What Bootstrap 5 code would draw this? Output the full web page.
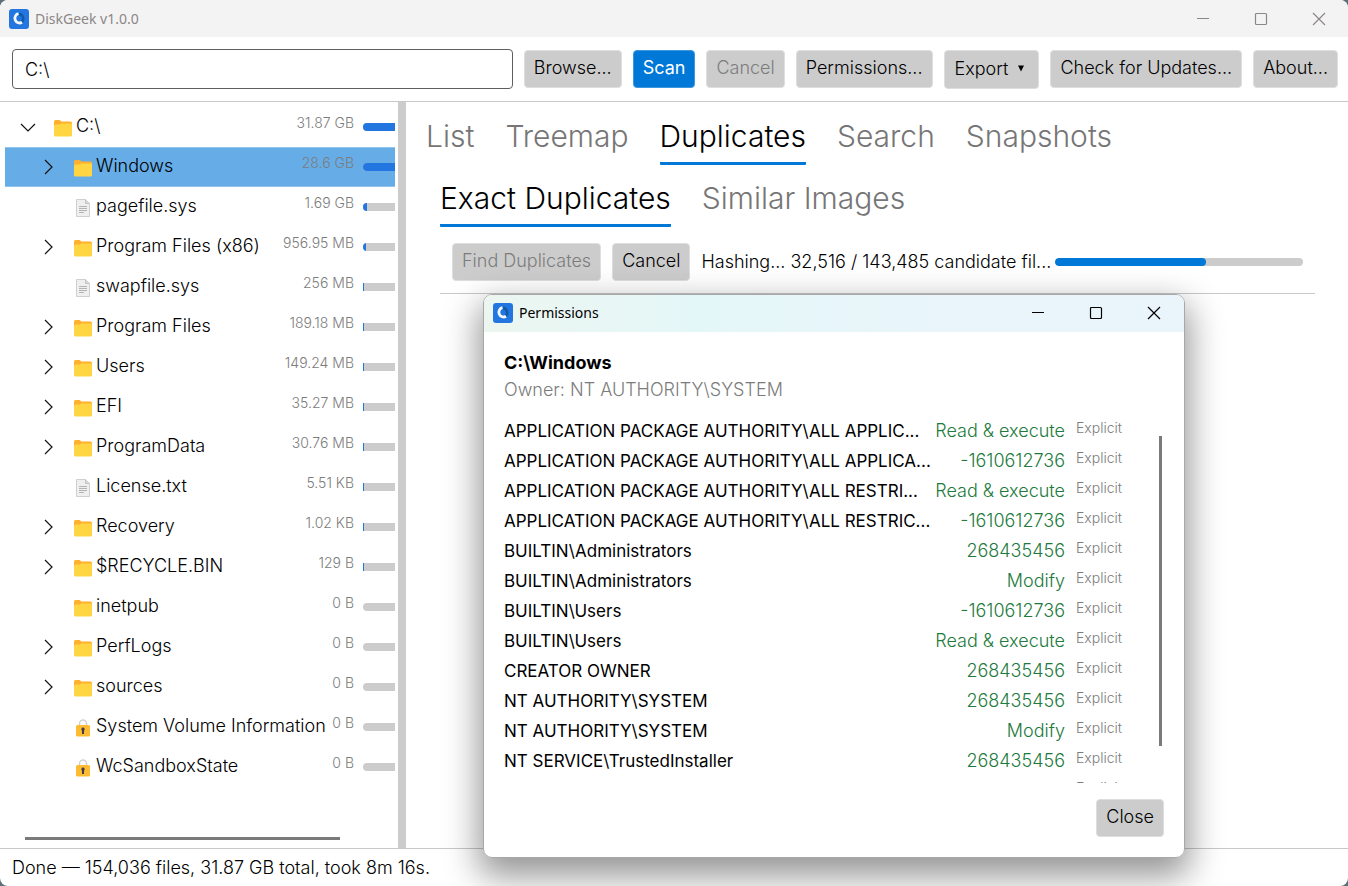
<!DOCTYPE html>
<html lang="en">
<head>
<meta charset="utf-8">
<meta name="viewport" content="width=device-width, initial-scale=1">
<title>DiskGeek v1.0.0</title>
<link href="https://cdn.jsdelivr.net/npm/bootstrap@5.3.0/dist/css/bootstrap.min.css" rel="stylesheet">
<style>
:root { --accent: #0078d7; --bar: #2376e0; --control: #cccccc; --dim: #7c7c7c; }
body { font-family: Inter, "Liberation Sans", sans-serif; font-size: 18px; line-height: 24px; font-weight: 300; color: #000; background: #5d6f78; }
.app-window { background: #fff; border-radius: 8px; }
.title-bar { height: 37px; font-family: "Noto Sans", "Open Sans", sans-serif; font-weight: 400; font-size: 14px; line-height: 20px; padding-left: 9px; gap: 6px; }
.app-window > .title-bar { background: #f3f3f3; color: #8c8686; }
.caption-btn { width: 58px; height: 36px; border: 0; background: none; color: inherit; padding: 0; display: flex; align-items: center; justify-content: center; }
.tool-bar { padding: 12px 10px 12px 12px; gap: 11px; border-bottom: 1px solid #c8c8c8; height: 65px; }
.path-box { height: 40px; border: 1px solid #5f5f5f; border-radius: 4px; padding: 0 12px; color: #000; font-size: 18px; font-weight: 300; }
.cmd { font-size: 18px; line-height: 23px; font-weight: 300; color: #000; background: var(--control); border: 1px solid #dedede; border-radius: 4px; padding: 5px 9px 8px; white-space: nowrap; }
.cmd:disabled { color: var(--dim); }
.cmd-primary { background: var(--accent); border-color: #3d98e0; color: #fff; font-weight: 400; }
.cmd-menu { padding: 6px 13px 8px 10px; display: flex; align-items: center; gap: 9px; }
.side-pane { width: 398px; padding: 5px 3px 0 5px; }
.splitter { width: 8px; background: var(--control); }
.tree-row { height: 40px; padding: 1px 0; }
.tree-row > div { height: 38px; }
.tree-row .current { background: #66ade7; box-shadow: 0 1px #90c4ee, 0 -1px #90c4ee; }
.toggle { width: 20px; height: 30px; padding: 0; border: 0; background: none; display: flex; align-items: center; justify-content: center; flex: none; }
.root .toggle { margin-left: 13px; margin-right: 16px; }
.child .toggle { margin-left: 33px; margin-right: 16px; }
.glyph { width: 18px; height: 18px; flex: none; margin-top: 2px; }
.name { margin-left: 4px; margin-bottom: 2px; white-space: nowrap; }
.size { margin-left: auto; color: var(--dim); font-size: 14px; line-height: 20px; margin-bottom: 8px; margin-right: 9px; white-space: nowrap; }
.usage { width: 32px; height: 8px; border-radius: 4px 0 0 4px; background: var(--control); flex: none; }
.usage .progress-bar { background: var(--bar); }
.h-scroll { height: 3px; background: #7a7a7a; margin: 0 55px 8px 20px; }
.tabs { gap: 31px; }
.tab-link { font-size: 30px; line-height: 36px; font-weight: 300; color: #767676; text-decoration: none; padding-bottom: 8px; border-bottom: 3px solid transparent; border-radius: 1px; }
.tab-link.active { color: #000; border-bottom-color: var(--accent); }
.main-pane { padding: 16px 33px 0 20px; }
.sub-pane { margin-left: 14px; padding-top: 15px; }
.find-bar { padding: 16px 12px 12px; gap: 11px; border-bottom: 1px solid #c8c8c8; }
.hash-bar { height: 8px; border-radius: 4px; background: var(--control); }
.hash-bar .progress-bar { background: var(--accent); border-radius: 4px; }
.status { border-top: 1px solid #c8c8c8; padding: 7px 12px; height: 38px; }
.dialog-layer { position: absolute; left: 483px; top: 294px; width: 702px; border-radius: 9px; box-shadow: 0 14px 34px 4px rgba(0,0,0,.42); }
.dialog-box { height: 564px; background: #fff; border: 1px solid #a8a8a8; border-radius: 9px; }
.dialog-box .title-bar { background: linear-gradient(90deg, #ecf6f0, #e4f7f8 30%, #e9f5fa 65%, #e9f5fb); padding-right: 1px; padding-bottom: 1px; }
.dialog-body { padding: 17px 20px 20px; line-height: 27px; }
.owner { color: var(--dim); }
.acl { margin-top: 13px; }
.acl table { border-collapse: collapse; min-width: 0; }
.acl td { height: 30px; padding: 0; white-space: nowrap; vertical-align: middle; line-height: 30px; }
.acl .who { font-size: 17px; font-weight: 400; }
.acl .rights { color: #217a3c; text-align: right; }
.acl .kind { color: var(--dim); font-size: 14px; line-height: 20px; width: 57px; padding: 0 0 6px 11px; }
.v-scroll { width: 3px; height: 310px; background: #7a7a7a; margin: 20px 2px 0 37px; }
</style>
</head>
<body>
<svg class="d-none" xmlns="http://www.w3.org/2000/svg">
  <symbol id="logo" viewBox="0 0 20 20"><rect width="20" height="20" rx="3" fill="#2376e0"/><path d="M10 3.500a6 6 0 0 1 5.500 6a6 6 0 0 1-5.500 6z" fill="#115aa8"/><circle cx="10" cy="9.500" r="2.800" fill="#2376e0"/><path d="M9.500 4.700a4.700 4.700 0 1 0 3.500 8.600" fill="none" stroke="#f4f8fd" stroke-width="2.800"/></symbol>
  <symbol id="folder" viewBox="0 0 18 18"><path d="M0 2.500a1.500 1.500 0 0 1 1.500-1.500h4L7.500 2.500H16.500A1.500 1.500 0 0 1 18 4V9H0z" fill="#ffb02e"/><path d="M0 7a1.500 1.500 0 0 1 1.500-1.500H5.500L7.500 4.500H17a1 1 0 0 1 1 1v10.500a1.500 1.500 0 0 1-1.500 1.500h-15A1.500 1.500 0 0 1 0 16z" fill="#ffd542"/></symbol>
  <symbol id="file" viewBox="0 0 18 18"><path d="M2.500 .5h9l4 4v13h-13z" fill="#efefef" stroke="#cfcfcf"/><path d="M11.500 .5v4h4" fill="#d8d8d8" stroke="#c4c4c4"/><path d="M5 7.500h8M5 9.500h8M5 11.500h8M5 13.500h5" stroke="#b4b4b4" fill="none"/></symbol>
  <symbol id="lock" viewBox="0 0 18 18"><path d="M5.500 8V4.500a3.500 3.500 0 0 1 7 0v3.500" fill="none" stroke="#d3d3d3" stroke-width="1.600"/><rect x="2" y="6" width="14" height="11.500" rx="1.500" fill="#fcbb30"/><path d="M9 8.500a1.800 1.800 0 0 1 1 3.200V15H8v-3.300a1.800 1.800 0 0 1 1-3.200z" fill="#433b45"/></symbol>
  <symbol id="right" viewBox="0 0 16 16"><path d="M5 1l7 7-7 7" fill="none" stroke="#111" stroke-width="1.200"/></symbol>
  <symbol id="down" viewBox="0 0 16 16"><path d="M1 5l7 7 7-7" fill="none" stroke="#111" stroke-width="1.200"/></symbol>
  <symbol id="min" viewBox="0 0 14 14"><path d="M1 6.500h12" stroke="currentColor" fill="none"/></symbol>
  <symbol id="max" viewBox="0 0 14 14"><rect x="1.500" y="1.500" width="11" height="11" rx="1" stroke="currentColor" stroke-width="1.200" fill="none"/></symbol>
  <symbol id="close" viewBox="0 0 14 14"><path d="M1 1l12 12M13 1L1 13" stroke="currentColor" stroke-width="1.200" fill="none"/></symbol>
</svg>

<div class="app-window d-flex flex-column vh-100 overflow-hidden">
  <header class="title-bar d-flex align-items-center flex-shrink-0">
    <svg width="20" height="20"><use href="#logo"/></svg><span>DiskGeek v1.0.0</span>
    <div class="d-flex ms-auto">
      <button class="caption-btn" aria-label="Minimize"><svg width="14" height="14"><use href="#min"/></svg></button>
      <button class="caption-btn" aria-label="Maximize"><svg width="14" height="14"><use href="#max"/></svg></button>
      <button class="caption-btn" aria-label="Close window"><svg width="14" height="14"><use href="#close"/></svg></button>
    </div>
  </header>

  <div class="tool-bar d-flex align-items-center flex-shrink-0">
    <input class="path-box flex-grow-1 w-25" type="text" value="C:\" aria-label="Path">
    <button class="cmd">Browse...</button>
    <button class="cmd cmd-primary">Scan</button>
    <button class="cmd" disabled>Cancel</button>
    <button class="cmd">Permissions...</button>
    <button class="cmd cmd-menu">Export <svg width="8" height="7" viewBox="0 0 8 7"><path d="M1 .5h6L4 6.500z"/></svg></button>
    <button class="cmd">Check for Updates...</button>
    <button class="cmd">About...</button>
  </div>

  <div class="d-flex flex-grow-1 overflow-hidden">
    <nav class="side-pane d-flex flex-column flex-shrink-0" aria-label="Folders">
      <ul class="list-unstyled mb-auto">
        <li class="tree-row root"><div class="d-flex align-items-center"><button class="toggle" aria-label="Collapse"><svg width="16" height="16"><use href="#down"/></svg></button><svg class="glyph"><use href="#folder"/></svg><span class="name">C:\</span><span class="size">31.87 GB</span><div class="progress usage"><div class="progress-bar" style="width:100%"></div></div></div></li>
        <li class="tree-row child"><div class="d-flex align-items-center current"><button class="toggle" aria-label="Expand"><svg width="16" height="16"><use href="#right"/></svg></button><svg class="glyph"><use href="#folder"/></svg><span class="name">Windows</span><span class="size">28.6 GB</span><div class="progress usage"><div class="progress-bar" style="width:100%"></div></div></div></li>
        <li class="tree-row child"><div class="d-flex align-items-center"><span class="toggle"></span><svg class="glyph"><use href="#file"/></svg><span class="name">pagefile.sys</span><span class="size">1.69 GB</span><div class="progress usage"><div class="progress-bar" style="width:12%"></div></div></div></li>
        <li class="tree-row child"><div class="d-flex align-items-center"><button class="toggle" aria-label="Expand"><svg width="16" height="16"><use href="#right"/></svg></button><svg class="glyph"><use href="#folder"/></svg><span class="name">Program Files (x86)</span><span class="size">956.95 MB</span><div class="progress usage"><div class="progress-bar" style="width:9%"></div></div></div></li>
        <li class="tree-row child"><div class="d-flex align-items-center"><span class="toggle"></span><svg class="glyph"><use href="#file"/></svg><span class="name">swapfile.sys</span><span class="size">256 MB</span><div class="progress usage rounded-0"><div class="progress-bar" style="width:3%"></div></div></div></li>
        <li class="tree-row child"><div class="d-flex align-items-center"><button class="toggle" aria-label="Expand"><svg width="16" height="16"><use href="#right"/></svg></button><svg class="glyph"><use href="#folder"/></svg><span class="name">Program Files</span><span class="size">189.18 MB</span><div class="progress usage rounded-0"><div class="progress-bar" style="width:3%"></div></div></div></li>
        <li class="tree-row child"><div class="d-flex align-items-center"><button class="toggle" aria-label="Expand"><svg width="16" height="16"><use href="#right"/></svg></button><svg class="glyph"><use href="#folder"/></svg><span class="name">Users</span><span class="size">149.24 MB</span><div class="progress usage rounded-0"><div class="progress-bar" style="width:3%"></div></div></div></li>
        <li class="tree-row child"><div class="d-flex align-items-center"><button class="toggle" aria-label="Expand"><svg width="16" height="16"><use href="#right"/></svg></button><svg class="glyph"><use href="#folder"/></svg><span class="name">EFI</span><span class="size">35.27 MB</span><div class="progress usage rounded-0"><div class="progress-bar" style="width:3%"></div></div></div></li>
        <li class="tree-row child"><div class="d-flex align-items-center"><button class="toggle" aria-label="Expand"><svg width="16" height="16"><use href="#right"/></svg></button><svg class="glyph"><use href="#folder"/></svg><span class="name">ProgramData</span><span class="size">30.76 MB</span><div class="progress usage rounded-0"><div class="progress-bar" style="width:3%"></div></div></div></li>
        <li class="tree-row child"><div class="d-flex align-items-center"><span class="toggle"></span><svg class="glyph"><use href="#file"/></svg><span class="name">License.txt</span><span class="size">5.51 KB</span><div class="progress usage rounded-0"><div class="progress-bar" style="width:3%"></div></div></div></li>
        <li class="tree-row child"><div class="d-flex align-items-center"><button class="toggle" aria-label="Expand"><svg width="16" height="16"><use href="#right"/></svg></button><svg class="glyph"><use href="#folder"/></svg><span class="name">Recovery</span><span class="size">1.02 KB</span><div class="progress usage rounded-0"><div class="progress-bar" style="width:3%"></div></div></div></li>
        <li class="tree-row child"><div class="d-flex align-items-center"><button class="toggle" aria-label="Expand"><svg width="16" height="16"><use href="#right"/></svg></button><svg class="glyph"><use href="#folder"/></svg><span class="name">$RECYCLE.BIN</span><span class="size">129 B</span><div class="progress usage rounded-0"><div class="progress-bar" style="width:3%"></div></div></div></li>
        <li class="tree-row child"><div class="d-flex align-items-center"><span class="toggle"></span><svg class="glyph"><use href="#folder"/></svg><span class="name">inetpub</span><span class="size">0 B</span><div class="progress usage"></div></div></li>
        <li class="tree-row child"><div class="d-flex align-items-center"><button class="toggle" aria-label="Expand"><svg width="16" height="16"><use href="#right"/></svg></button><svg class="glyph"><use href="#folder"/></svg><span class="name">PerfLogs</span><span class="size">0 B</span><div class="progress usage"></div></div></li>
        <li class="tree-row child"><div class="d-flex align-items-center"><button class="toggle" aria-label="Expand"><svg width="16" height="16"><use href="#right"/></svg></button><svg class="glyph"><use href="#folder"/></svg><span class="name">sources</span><span class="size">0 B</span><div class="progress usage"></div></div></li>
        <li class="tree-row child"><div class="d-flex align-items-center"><span class="toggle"></span><svg class="glyph"><use href="#lock"/></svg><span class="name">System Volume Information</span><span class="size">0 B</span><div class="progress usage"></div></div></li>
        <li class="tree-row child"><div class="d-flex align-items-center"><span class="toggle"></span><svg class="glyph"><use href="#lock"/></svg><span class="name">WcSandboxState</span><span class="size">0 B</span><div class="progress usage"></div></div></li>
      </ul>
      <div class="h-scroll"></div>
    </nav>
    <div class="splitter flex-shrink-0"></div>
    <main class="main-pane flex-grow-1">
      <nav class="tabs d-flex" aria-label="Views">
        <a class="tab-link" href="#list">List</a>
        <a class="tab-link" href="#treemap">Treemap</a>
        <a class="tab-link active" href="#duplicates">Duplicates</a>
        <a class="tab-link" href="#search">Search</a>
        <a class="tab-link" href="#snapshots">Snapshots</a>
      </nav>
      <section class="sub-pane">
        <nav class="tabs d-flex" aria-label="Duplicate modes">
          <a class="tab-link active" href="#exact">Exact Duplicates</a>
          <a class="tab-link" href="#similar">Similar Images</a>
        </nav>
        <div class="find-bar d-flex align-items-center">
          <button class="cmd" disabled>Find Duplicates</button>
          <button class="cmd">Cancel</button>
          <div class="d-flex flex-grow-1 align-items-center gap-1">
            <span class="text-nowrap">Hashing... 32,516 / 143,485 candidate fil...</span>
            <div class="progress hash-bar flex-grow-1"><div class="progress-bar" style="width:61%"></div></div>
          </div>
        </div>
      </section>
    </main>
  </div>

  <footer class="status flex-shrink-0">Done — 154,036 files, 31.87 GB total, took 8m 16s.</footer>
</div>

<div class="dialog-layer">
<div class="dialog-box d-flex flex-column overflow-hidden" role="dialog" aria-label="Permissions">
  <div class="title-bar d-flex align-items-center flex-shrink-0">
    <svg width="20" height="20"><use href="#logo"/></svg><span>Permissions</span>
    <div class="d-flex ms-auto">
      <button class="caption-btn" aria-label="Minimize dialog"><svg width="14" height="14"><use href="#min"/></svg></button>
      <button class="caption-btn" aria-label="Maximize dialog"><svg width="14" height="14"><use href="#max"/></svg></button>
      <button class="caption-btn" aria-label="Close dialog"><svg width="14" height="14"><use href="#close"/></svg></button>
    </div>
  </div>
  <div class="dialog-body d-flex flex-column flex-grow-1 overflow-hidden">
    <div class="fw-bold">C:\Windows</div>
    <div class="owner">Owner: NT AUTHORITY\SYSTEM</div>
    <div class="acl d-flex flex-grow-1 overflow-hidden">
      <table class="flex-grow-1 align-self-start">
        <tbody>
          <tr><td class="who">APPLICATION PACKAGE AUTHORITY\ALL APPLIC...</td><td class="rights">Read &amp; execute</td><td class="kind">Explicit</td></tr>
          <tr><td class="who">APPLICATION PACKAGE AUTHORITY\ALL APPLICA...</td><td class="rights">-1610612736</td><td class="kind">Explicit</td></tr>
          <tr><td class="who">APPLICATION PACKAGE AUTHORITY\ALL RESTRI...</td><td class="rights">Read &amp; execute</td><td class="kind">Explicit</td></tr>
          <tr><td class="who">APPLICATION PACKAGE AUTHORITY\ALL RESTRIC...</td><td class="rights">-1610612736</td><td class="kind">Explicit</td></tr>
          <tr><td class="who">BUILTIN\Administrators</td><td class="rights">268435456</td><td class="kind">Explicit</td></tr>
          <tr><td class="who">BUILTIN\Administrators</td><td class="rights">Modify</td><td class="kind">Explicit</td></tr>
          <tr><td class="who">BUILTIN\Users</td><td class="rights">-1610612736</td><td class="kind">Explicit</td></tr>
          <tr><td class="who">BUILTIN\Users</td><td class="rights">Read &amp; execute</td><td class="kind">Explicit</td></tr>
          <tr><td class="who">CREATOR OWNER</td><td class="rights">268435456</td><td class="kind">Explicit</td></tr>
          <tr><td class="who">NT AUTHORITY\SYSTEM</td><td class="rights">268435456</td><td class="kind">Explicit</td></tr>
          <tr><td class="who">NT AUTHORITY\SYSTEM</td><td class="rights">Modify</td><td class="kind">Explicit</td></tr>
          <tr><td class="who">NT SERVICE\TrustedInstaller</td><td class="rights">268435456</td><td class="kind">Explicit</td></tr>
          <tr><td class="who">NT SERVICE\TrustedInstaller</td><td class="rights"></td><td class="kind">Explicit</td></tr>
        </tbody>
      </table>
      <div class="v-scroll flex-shrink-0"></div>
    </div>
    <div class="d-flex justify-content-end pt-3"><button class="cmd">Close</button></div>
  </div>
</div>
</div>
<script src="https://cdn.jsdelivr.net/npm/bootstrap@5.3.0/dist/js/bootstrap.bundle.min.js"></script>
</body>
</html>
